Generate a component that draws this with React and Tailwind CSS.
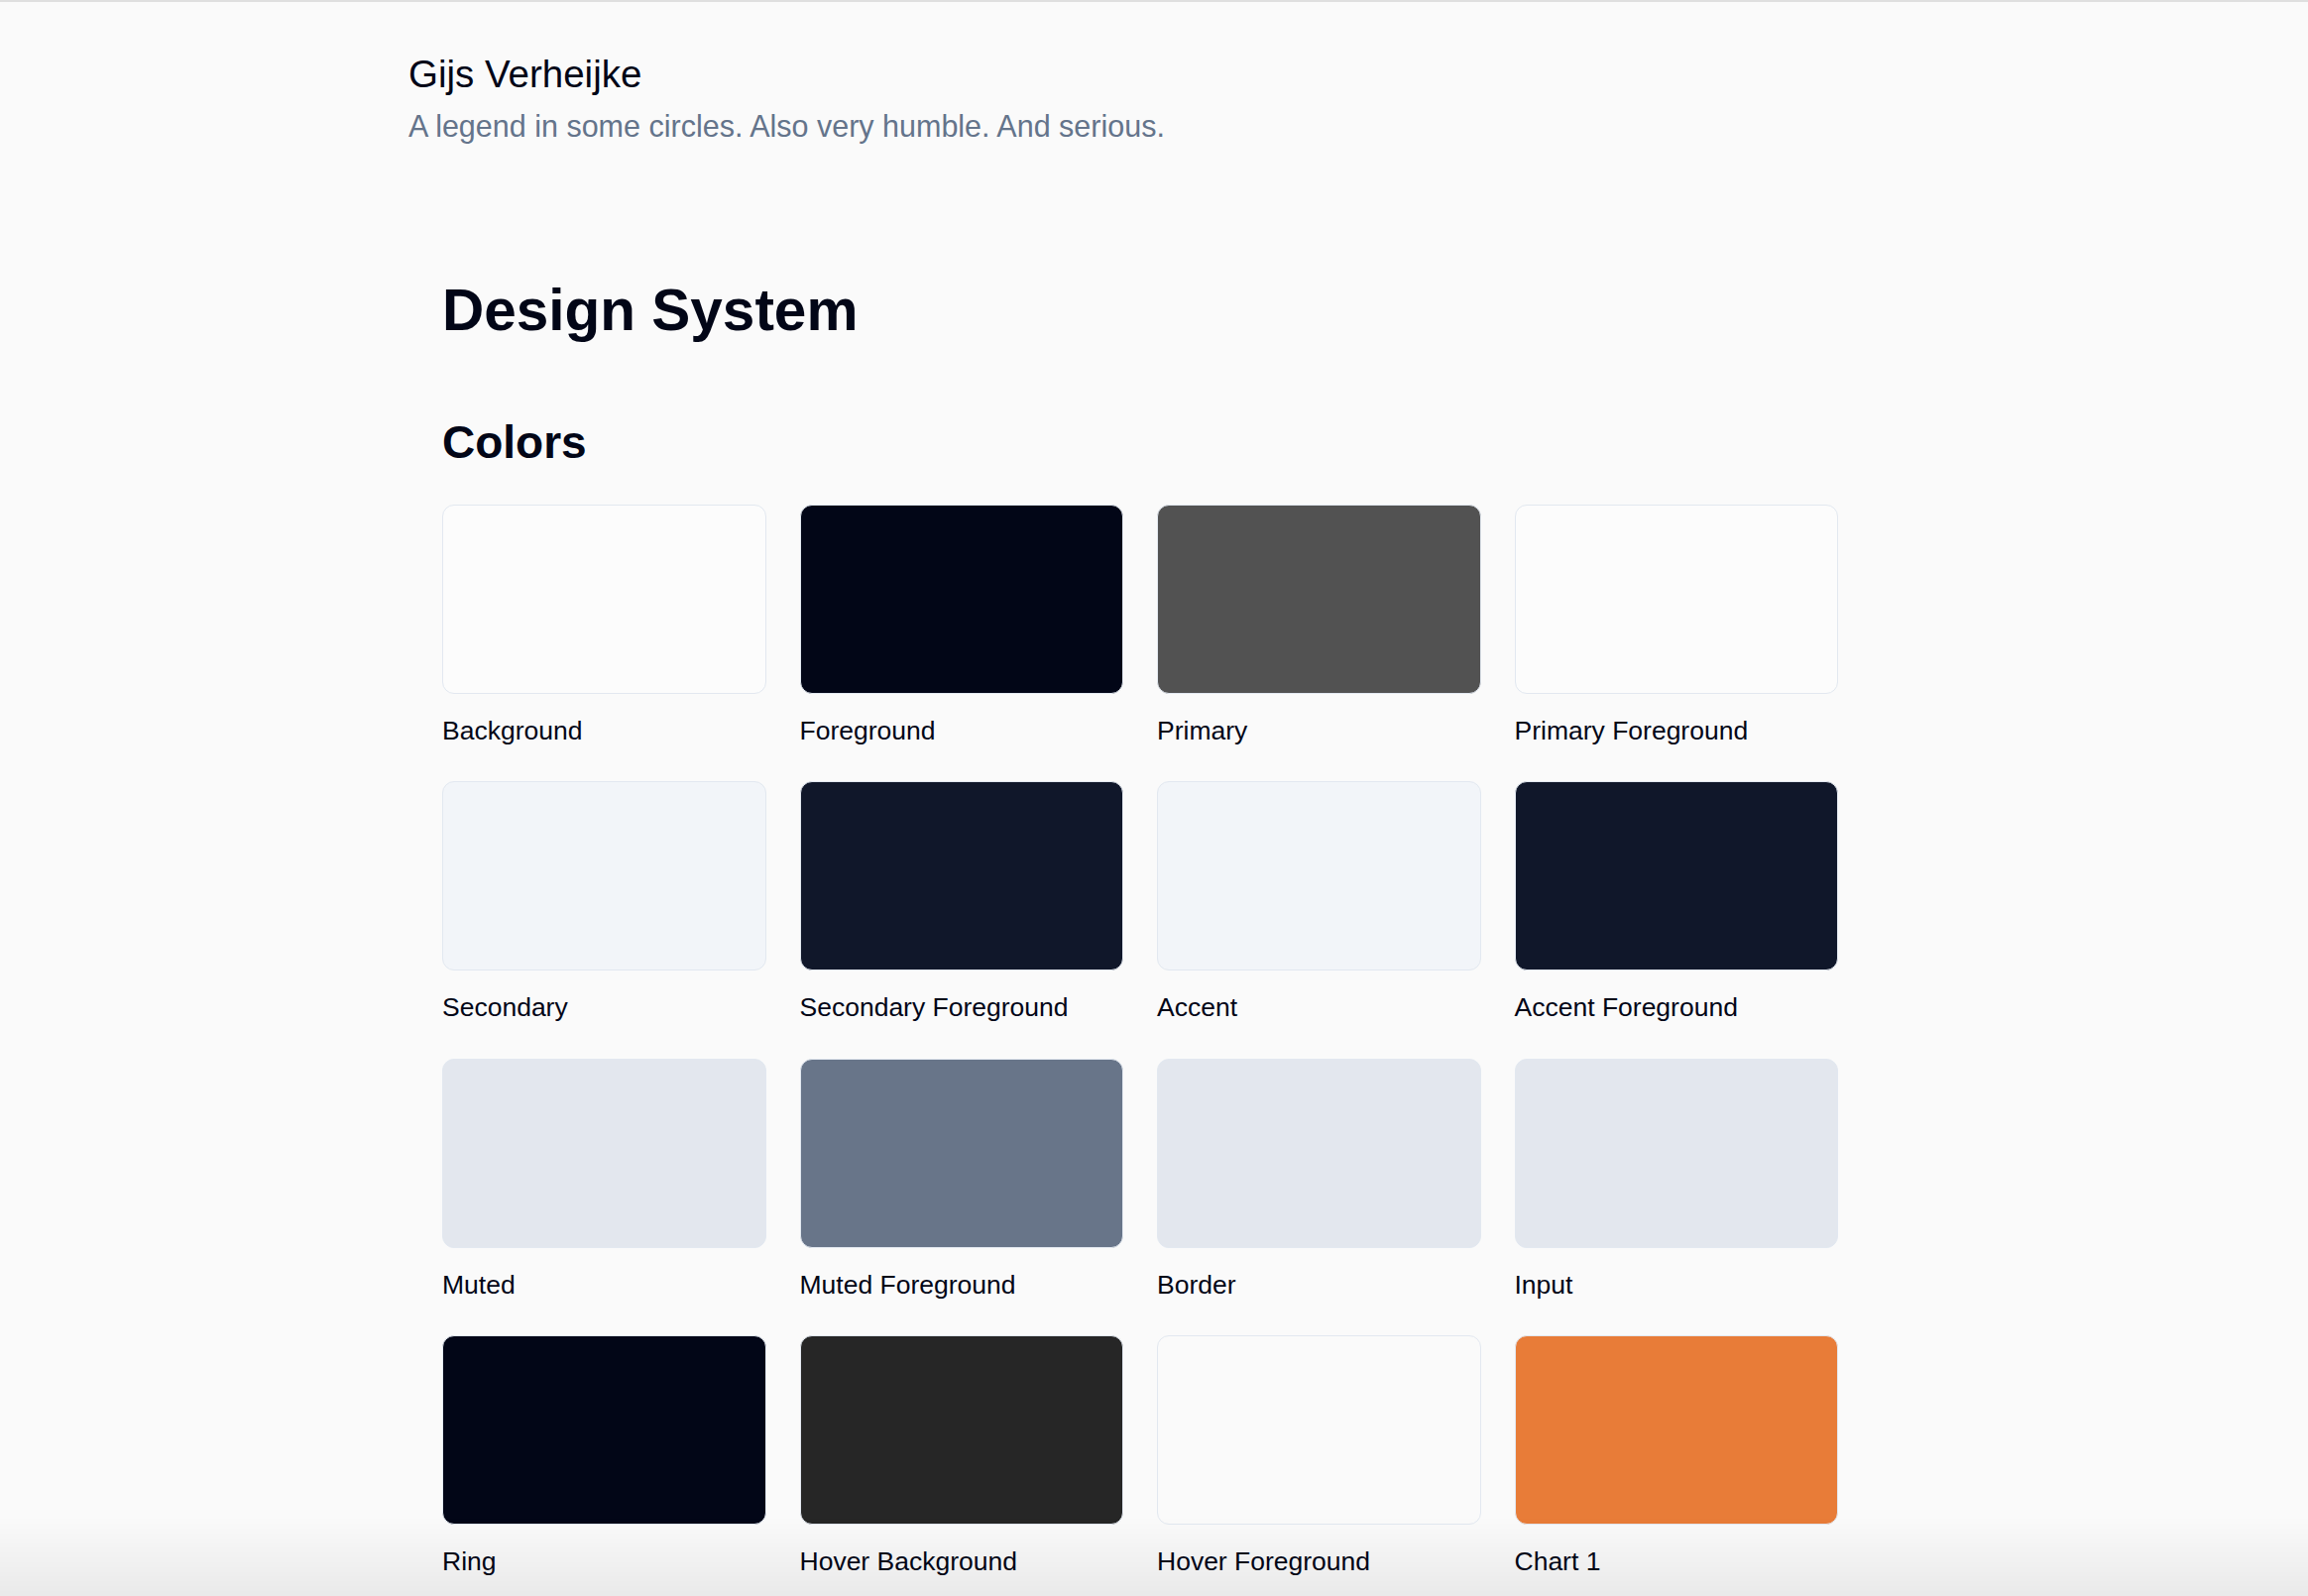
import React from "react";

const swatches = [
  { name: "Background", cls: "bg-[#fcfcfc]" },
  { name: "Foreground", cls: "bg-[#020617]" },
  { name: "Primary", cls: "bg-[#525252]" },
  { name: "Primary Foreground", cls: "bg-[#fcfcfc]" },
  { name: "Secondary", cls: "bg-[#f2f5f9]" },
  { name: "Secondary Foreground", cls: "bg-[#10172a]" },
  { name: "Accent", cls: "bg-[#f2f5f9]" },
  { name: "Accent Foreground", cls: "bg-[#10172a]" },
  { name: "Muted", cls: "bg-[#e3e7ee]" },
  { name: "Muted Foreground", cls: "bg-[#687589]" },
  { name: "Border", cls: "bg-[#e3e7ee]" },
  { name: "Input", cls: "bg-[#e3e7ee]" },
  { name: "Ring", cls: "bg-[#020617]" },
  { name: "Hover Background", cls: "bg-[#262626]" },
  { name: "Hover Foreground", cls: "bg-[#fafafa]" },
  { name: "Chart 1", cls: "bg-[#e87c38]" },
  { name: "Chart 2", cls: "bg-[#2a9d8f]" },
  { name: "Chart 3", cls: "bg-[#274754]" },
  { name: "Chart 4", cls: "bg-[#e8c468]" },
  { name: "Chart 5", cls: "bg-[#f4a462]" },
];

function Swatch({ name, cls }) {
  return (
    <div className="flex flex-col">
      <div className={`h-[191px] rounded-[12px] border-[1.5px] border-[#e2e8f0] ${cls}`} />
      <div className="mt-[24px] text-[26.5px] leading-none text-[#020617]">{name}</div>
    </div>
  );
}

export default function App() {
  return (
    <div className="min-h-screen bg-[#fafafa] font-['Liberation_Sans',Arial,sans-serif] text-[#020617]">
      <div className="h-[2px] bg-[#dfdfdf]" />
      <div className="mx-auto w-[1504px] pb-[120px]">
        <header className="pt-[54px]">
          <div className="text-[38.5px] leading-none text-[#020617]">Gijs Verheijke</div>
          <div className="mt-[17px] text-[30.5px] leading-none text-[#64748b]">
            A legend in some circles. Also very humble. And serious.
          </div>
        </header>
        <main className="pl-[34px]">
          <h1 className="mt-[142px] text-[58.5px] font-bold leading-none">Design System</h1>
          <h2 className="mt-[80px] text-[46px] font-bold leading-none">Colors</h2>
          <div className="mt-[40px] grid w-[1408px] grid-cols-4 gap-x-[34px] gap-y-[38px]">
            {swatches.map((s) => (
              <Swatch key={s.name} {...s} />
            ))}
          </div>
        </main>
      </div>
      <div className="pointer-events-none fixed inset-x-0 bottom-0 h-[80px] bg-gradient-to-b from-transparent to-black/[0.065]" />
    </div>
  );
}
